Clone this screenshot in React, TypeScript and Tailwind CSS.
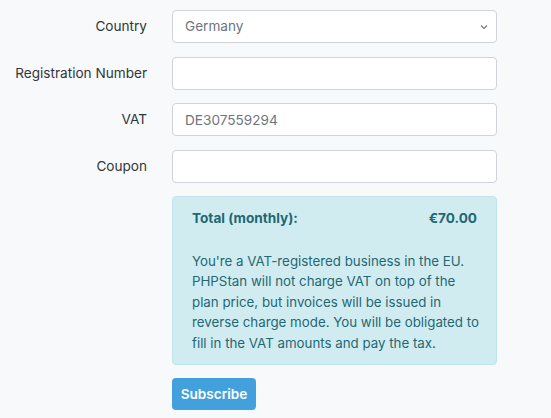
import React from 'react';

const font = { fontFamily: 'Inter, "Noto Sans", sans-serif' };

const Row = ({ label, children }: { label: string; children: React.ReactNode }) => (
  <div className="flex items-center">
    <label className="w-[147px] shrink-0 whitespace-nowrap text-right text-[13.6px] text-[#2f363c]">{label}</label>
    <div className="ml-[25px] w-[325px]">{children}</div>
  </div>
);

const inputCls =
  'block h-[33px] w-full rounded-[4px] border border-[#ced4da] bg-white px-[12px] text-[13.6px] text-[#6c757d] outline-none';

const lines = [
  "You're a VAT-registered business in the EU.",
  'PHPStan will not charge VAT on top of the',
  'plan price, but invoices will be issued in',
  'reverse charge mode. You will be obligated to',
  'fill in the VAT amounts and pay the tax.',
];

export default function App() {
  return (
    <div className="h-[418px] w-full overflow-hidden bg-[#f8f9fa] pt-[10px]" style={font}>
      <div className="flex flex-col gap-[13.5px]">
        <Row label="Country">
          <div className="relative">
            <select className={inputCls + ' appearance-none'} defaultValue="DE">
              <option value="DE">Germany</option>
            </select>
            <svg
              className="pointer-events-none absolute right-[9px] top-1/2 -translate-y-1/2"
              width="8"
              height="5"
              viewBox="0 0 8 5"
              fill="none"
            >
              <path d="M1 1l3 3 3-3" stroke="#6c757d" strokeWidth="1.1" />
            </svg>
          </div>
        </Row>
        <Row label="Registration Number">
          <input type="text" className={inputCls} />
        </Row>
        <Row label="VAT">
          <input type="text" className={inputCls} defaultValue="DE307559294" />
        </Row>
        <Row label="Coupon">
          <input type="text" className={inputCls} />
        </Row>

        <div className="ml-[172px] w-[325px]">
          <div className="rounded-[4px] border border-[#bee5eb] bg-[#d1ecf1] px-[19px] pb-[11px] pt-[11px] text-[13.6px] leading-[20.5px] text-[#1f6874]">
            <div className="flex justify-between font-bold">
              <span>Total (monthly):</span>
              <span>€70.00</span>
            </div>
            <p className="mt-[22px] text-[13.3px]">
              {lines.map((l) => (
                <span key={l} className="block whitespace-nowrap">
                  {l}
                </span>
              ))}
            </p>
          </div>
          <button className="mt-[13px] h-[32px] w-[84px] rounded-[4px] bg-[#42a1dc] text-[13.6px] font-semibold text-white">
            Subscribe
          </button>
        </div>
      </div>
    </div>
  );
}
